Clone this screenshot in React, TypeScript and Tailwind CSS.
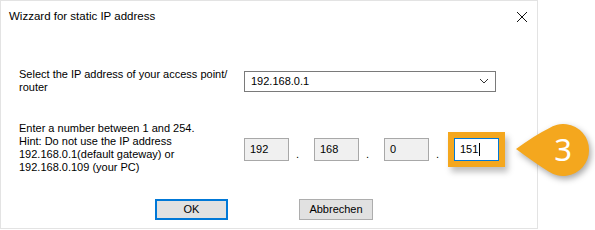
import React from "react";

const ui = { fontFamily: '"Noto Sans", "Liberation Sans", sans-serif' };
const ms = { fontFamily: '"Liberation Sans", Arial, sans-serif' };

function Box({ value }: { value: string }) {
  return (
    <div className="w-[45px] h-[23px] bg-[#f0f0f0] border border-[#a8a8a8] flex items-center pl-[5px] text-[11px] text-black">
      {value}
    </div>
  );
}

function Dot() {
  return (
    <div className="w-[25px] h-[23px] flex items-end pl-[7px] text-[11px] leading-[14px] text-black">.</div>
  );
}

export default function App() {
  return (
    <div className="relative w-[595px] h-[230px] bg-white overflow-hidden">
      <div className="w-[538px] h-[229px] border border-[#e3e3e3] flex flex-col bg-white" style={ms}>
        <div className="h-[32px] flex items-center justify-between pl-[8px] pr-[9px]">
          <span className="text-[11.5px] text-black">Wizzard for static IP address</span>
          <svg width="12" height="12" viewBox="0 0 12 12">
            <path d="M1 1 L11 11 M11 1 L1 11" stroke="#111" strokeWidth="1" />
          </svg>
        </div>

        <div className="mt-[33px] h-[30px] flex items-center">
          <div className="w-[243px] pl-[18px] text-[11px] leading-[13px] text-black">
            Select the IP address of your access point/
            <br />
            router
          </div>
          <div className="w-[252px] h-[21px] border border-[#7a7a7a] flex items-center justify-between pl-[6px] pr-[6px] text-[11px] text-black">
            <span>192.168.0.1</span>
            <svg width="10" height="6" viewBox="0 0 10 6">
              <path d="M1 1 L5 5 L9 1" stroke="#333" strokeWidth="1" fill="none" />
            </svg>
          </div>
        </div>

        <div className="mt-[26px] h-[52px] flex items-center">
          <div className="w-[243px] pl-[18px] text-[11px] leading-[13px] text-black">
            Enter a number between 1 and 254.
            <br />
            Hint: Do not use the IP address
            <br />
            192.168.0.1(default gateway) or
            <br />
            192.168.0.109 (your PC)
          </div>
          <div className="flex items-center mt-[3px]">
            <Box value="192" />
            <Dot />
            <Box value="168" />
            <Dot />
            <Box value="0" />
            <Dot />
            <div className="w-[45px] h-[23px] bg-white border border-[#0078d7] flex items-center pl-[5px] text-[11px] text-black shadow-[0_0_0_6px_#f4a71e,3px_5px_6px_6px_rgba(0,0,0,0.25)]">
              151<span className="inline-block w-px h-[13px] bg-black ml-[1px]" />
            </div>
          </div>
        </div>

        <div className="mt-[25px] flex">
          <div className="ml-[154px] w-[73px] h-[21px] bg-[#e1e1e1] border-2 border-[#0078d7] flex items-center justify-center text-[11px] text-black">
            OK
          </div>
          <div className="ml-[71px] w-[74px] h-[21px] bg-[#e1e1e1] border border-[#adadad] flex items-center justify-center text-[11px] text-black">
            Abbrechen
          </div>
        </div>
      </div>

      <div className="absolute left-[508px] top-[116px] w-[87px] h-[72px]">
        <svg width="87" height="72" viewBox="508 116 87 72" className="drop-shadow-[2px_3px_3px_rgba(0,0,0,0.35)]">
          <path
            d="M516 149 Q535 135 548.6 128.4 A26 26 0 1 1 548.6 171.6 Q535 163 516 149 Z"
            fill="#f4a71e"
          />
        </svg>
        <div className="absolute left-[40px] top-[16px] w-[30px] text-center text-[31px] leading-[34px] text-white" style={ui}>
          3
        </div>
      </div>
    </div>
  );
}
